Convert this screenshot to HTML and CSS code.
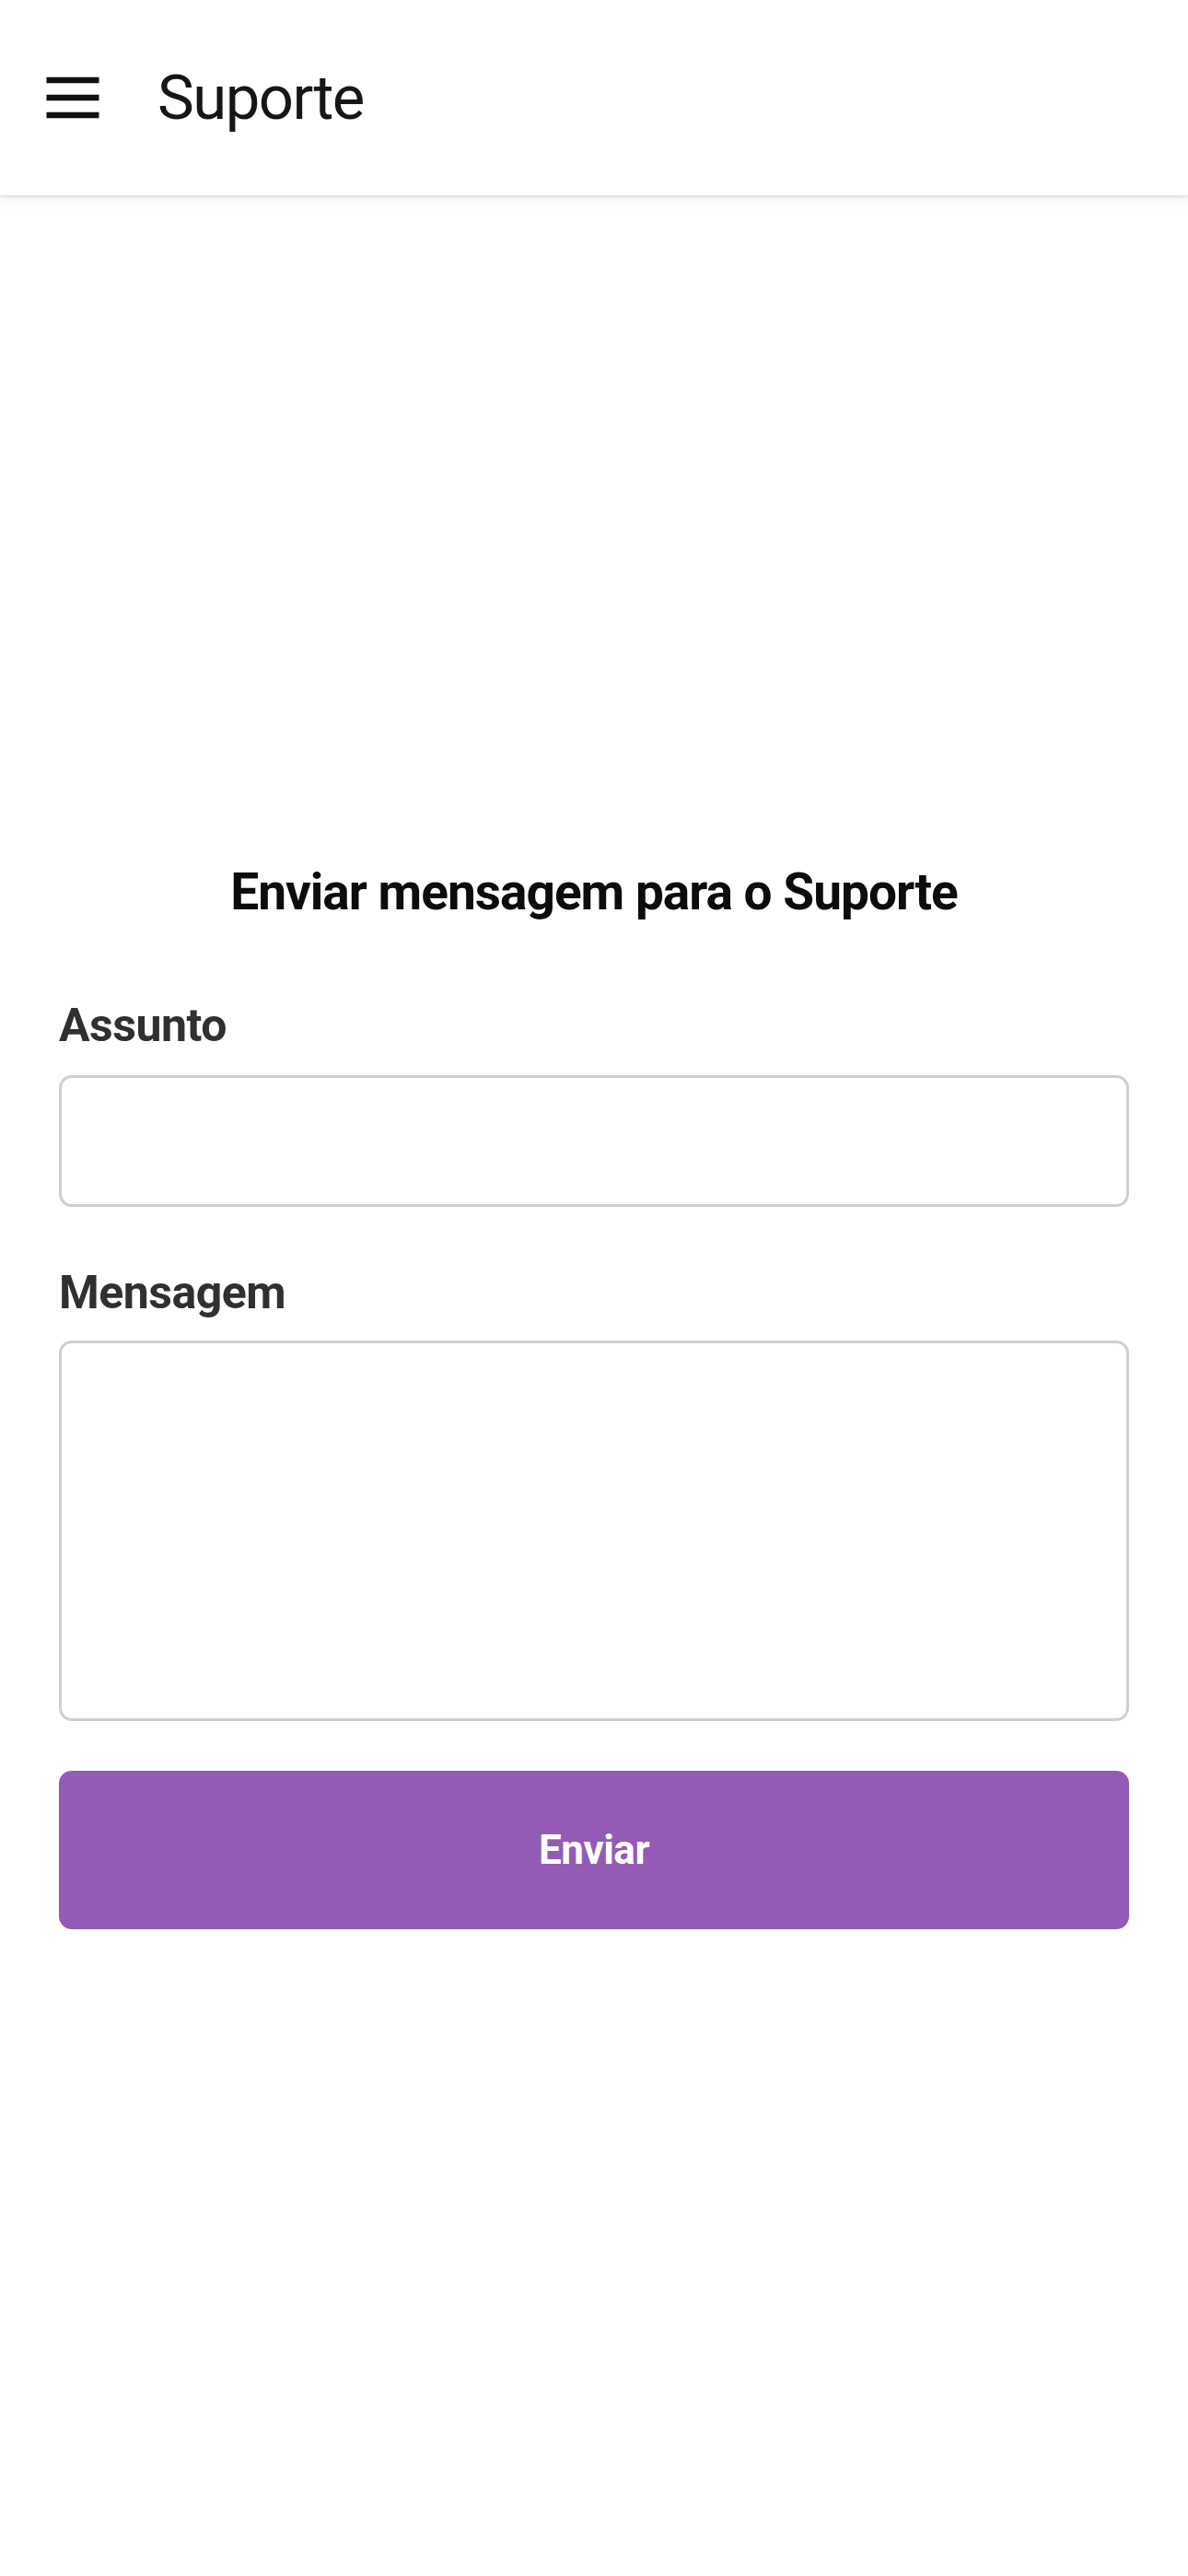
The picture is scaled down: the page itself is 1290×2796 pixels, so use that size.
FILE: index.html
```html
<!DOCTYPE html>
<html lang="pt">
<head>
<meta charset="utf-8">
<title>Suporte</title>
<link rel="stylesheet" href="styles.css">
</head>
<body>
<header class="appbar">
  <button class="menu-btn" aria-label="Menu">
    <svg viewBox="0 0 24 24" width="76" height="76"><path d="M3 6h18M3 12h18M3 18h18" stroke="#111" stroke-width="2" fill="none"/></svg>
  </button>
  <h1 class="appbar-title">Suporte</h1>
</header>
<main class="content">
  <h2 class="form-title">Enviar mensagem para o Suporte</h2>
  <form class="form">
    <label class="field-label field-label-first" for="assunto">Assunto</label>
    <input class="field-input" id="assunto" type="text">
    <label class="field-label field-label-second" for="mensagem">Mensagem</label>
    <textarea class="field-textarea" id="mensagem"></textarea>
    <button class="submit-btn" type="button">Enviar</button>
  </form>
</main>
</body>
</html>
```
FILE: styles.css
```css
* { box-sizing: border-box; }
html, body { margin: 0; padding: 0; background: #fff; }
body { font-family: Roboto, "Noto Sans", "Liberation Sans", sans-serif; color: #111; }

.appbar {
  height: 212px;
  background: #fff;
  display: flex;
  align-items: center;
  padding-left: 41px;
  box-shadow: 0 2px 3px rgba(0,0,0,0.10), 0 6px 14px rgba(0,0,0,0.05);
  position: relative;
  z-index: 1;
}
.menu-btn {
  width: 76px;
  height: 76px;
  padding: 0;
  margin: 0;
  border: 0;
  background: none;
  display: flex;
}
.menu-btn svg { display: block; }
.appbar-title {
  margin: 0 0 0 54px;
  font-size: 67px;
  font-weight: 400;
  color: #161616;
  letter-spacing: -1.5px;
  line-height: 1;
}

.content { padding: 0 64px; }
.form-title {
  margin: 723px 0 0;
  text-align: center;
  font-size: 55px;
  line-height: 67px;
  font-weight: 700;
  color: #0c0c0c;
  letter-spacing: -1px;
}
.form { display: flex; flex-direction: column; }
.field-label {
  font-size: 50px;
  line-height: 55px;
  font-weight: 700;
  color: #303030;
  letter-spacing: -0.5px;
}
.field-label-first { margin-top: 84px; }
.field-label-second { margin-top: 66px; }
.field-input, .field-textarea {
  display: block;
  width: 100%;
  border: 3px solid #cfcfcf;
  border-radius: 14px;
  background: #fff;
  font: inherit;
  resize: none;
  outline: none;
}
.field-input { height: 143px; margin-top: 26px; }
.field-textarea { height: 413px; margin-top: 24px; }
.submit-btn {
  margin-top: 54px;
  height: 172px;
  border: 0;
  border-radius: 14px;
  background: #935bb5;
  color: #fff;
  font-family: inherit;
  font-size: 44px;
  font-weight: 700;
  letter-spacing: -0.5px;
}
```
